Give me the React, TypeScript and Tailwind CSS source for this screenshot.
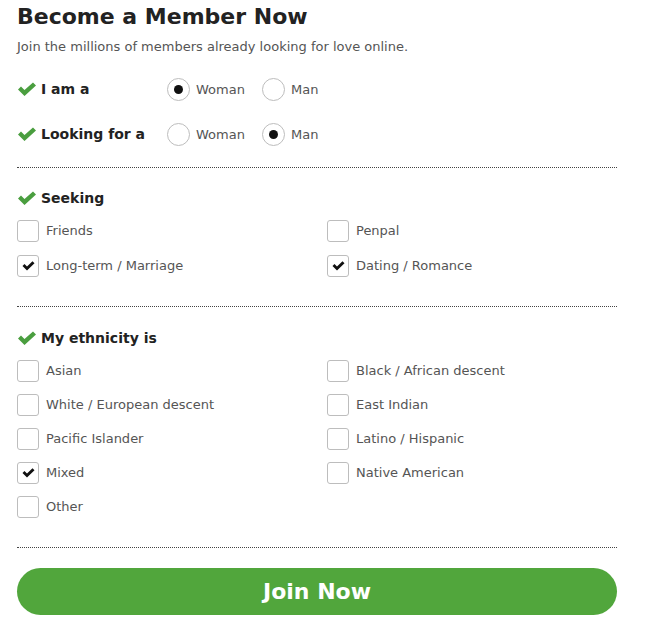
import React from "react";

const font = { fontFamily: '"DejaVu Sans", "Open Sans", sans-serif' };

function GreenCheck() {
  return (
    <svg width="20" height="15" viewBox="0 0 20 15" className="shrink-0">
      <path d="M1 7.5 L4 4.5 L7.5 8 L16 0.5 L19 3.5 L7.5 14 Z" fill="#4a9e3f" />
    </svg>
  );
}

function Radio({ checked, label }: { checked?: boolean; label: string }) {
  return (
    <div className="flex items-center">
      <div className="w-[23px] h-[23px] rounded-full border border-[#bdbdbd] flex items-center justify-center bg-white">
        {checked && <div className="w-[9px] h-[9px] rounded-full bg-[#111]" />}
      </div>
      <span className="ml-[6px] text-[13px] text-[#555]">{label}</span>
    </div>
  );
}

function Box({ checked, label }: { checked?: boolean; label: string }) {
  return (
    <div className="flex items-center h-[22px]">
      <div className="w-[22px] h-[22px] rounded-[3px] border border-[#bdbdbd] flex items-center justify-center bg-white shrink-0">
        {checked && (
          <svg width="13" height="10" viewBox="0 0 13 10">
            <path d="M0.5 5 L2.5 3 L5 5.5 L10.5 0.3 L12.5 2.3 L5 9.5 Z" fill="#111" />
          </svg>
        )}
      </div>
      <span className="ml-[7px] text-[13px] text-[#555]">{label}</span>
    </div>
  );
}

function Heading({ text }: { text: string }) {
  return (
    <div className="flex items-center gap-[4px] h-[20px]">
      <GreenCheck />
      <span className="text-[14px] font-bold text-[#222]">{text}</span>
    </div>
  );
}

export default function App() {
  return (
    <div className="bg-white w-[658px] h-[633px] px-[17px] pt-[3px]" style={font}>
      <div className="w-[600px] flex flex-col">
        <h1 className="text-[22px] font-bold text-[#222] leading-[28px]">Become a Member Now</h1>
        <p className="text-[13px] text-[#555] leading-[18px] mt-[7px]">
          Join the millions of members already looking for love online.
        </p>
        <div className="flex items-center mt-[22px] h-[23px]">
          <div className="w-[150px]">
            <Heading text="I am a" />
          </div>
          <div className="w-[95px]"><Radio checked label="Woman" /></div>
          <Radio label="Man" />
        </div>
        <div className="flex items-center mt-[22px] h-[23px]">
          <div className="w-[150px]">
            <Heading text="Looking for a" />
          </div>
          <div className="w-[95px]"><Radio label="Woman" /></div>
          <Radio checked label="Man" />
        </div>
        <div className="border-t border-dotted border-[#444] mt-[21px]" />
        <div className="mt-[20px]">
          <Heading text="Seeking" />
        </div>
        <div className="grid grid-cols-[310px_1fr] gap-y-[13px] mt-[12px]">
          <Box label="Friends" />
          <Box label="Penpal" />
          <Box checked label="Long-term / Marriage" />
          <Box checked label="Dating / Romance" />
        </div>
        <div className="border-t border-dotted border-[#444] mt-[29px]" />
        <div className="mt-[21px]">
          <Heading text="My ethnicity is" />
        </div>
        <div className="grid grid-cols-[310px_1fr] gap-y-[12px] mt-[12px]">
          <Box label="Asian" />
          <Box label="Black / African descent" />
          <Box label="White / European descent" />
          <Box label="East Indian" />
          <Box label="Pacific Islander" />
          <Box label="Latino / Hispanic" />
          <Box checked label="Mixed" />
          <Box label="Native American" />
          <Box label="Other" />
        </div>
        <div className="border-t border-dotted border-[#444] mt-[29px]" />
        <button className="mt-[20px] h-[47px] w-full rounded-full bg-[#51a63c] text-white text-[22px] font-bold">
          Join Now
        </button>
      </div>
    </div>
  );
}
